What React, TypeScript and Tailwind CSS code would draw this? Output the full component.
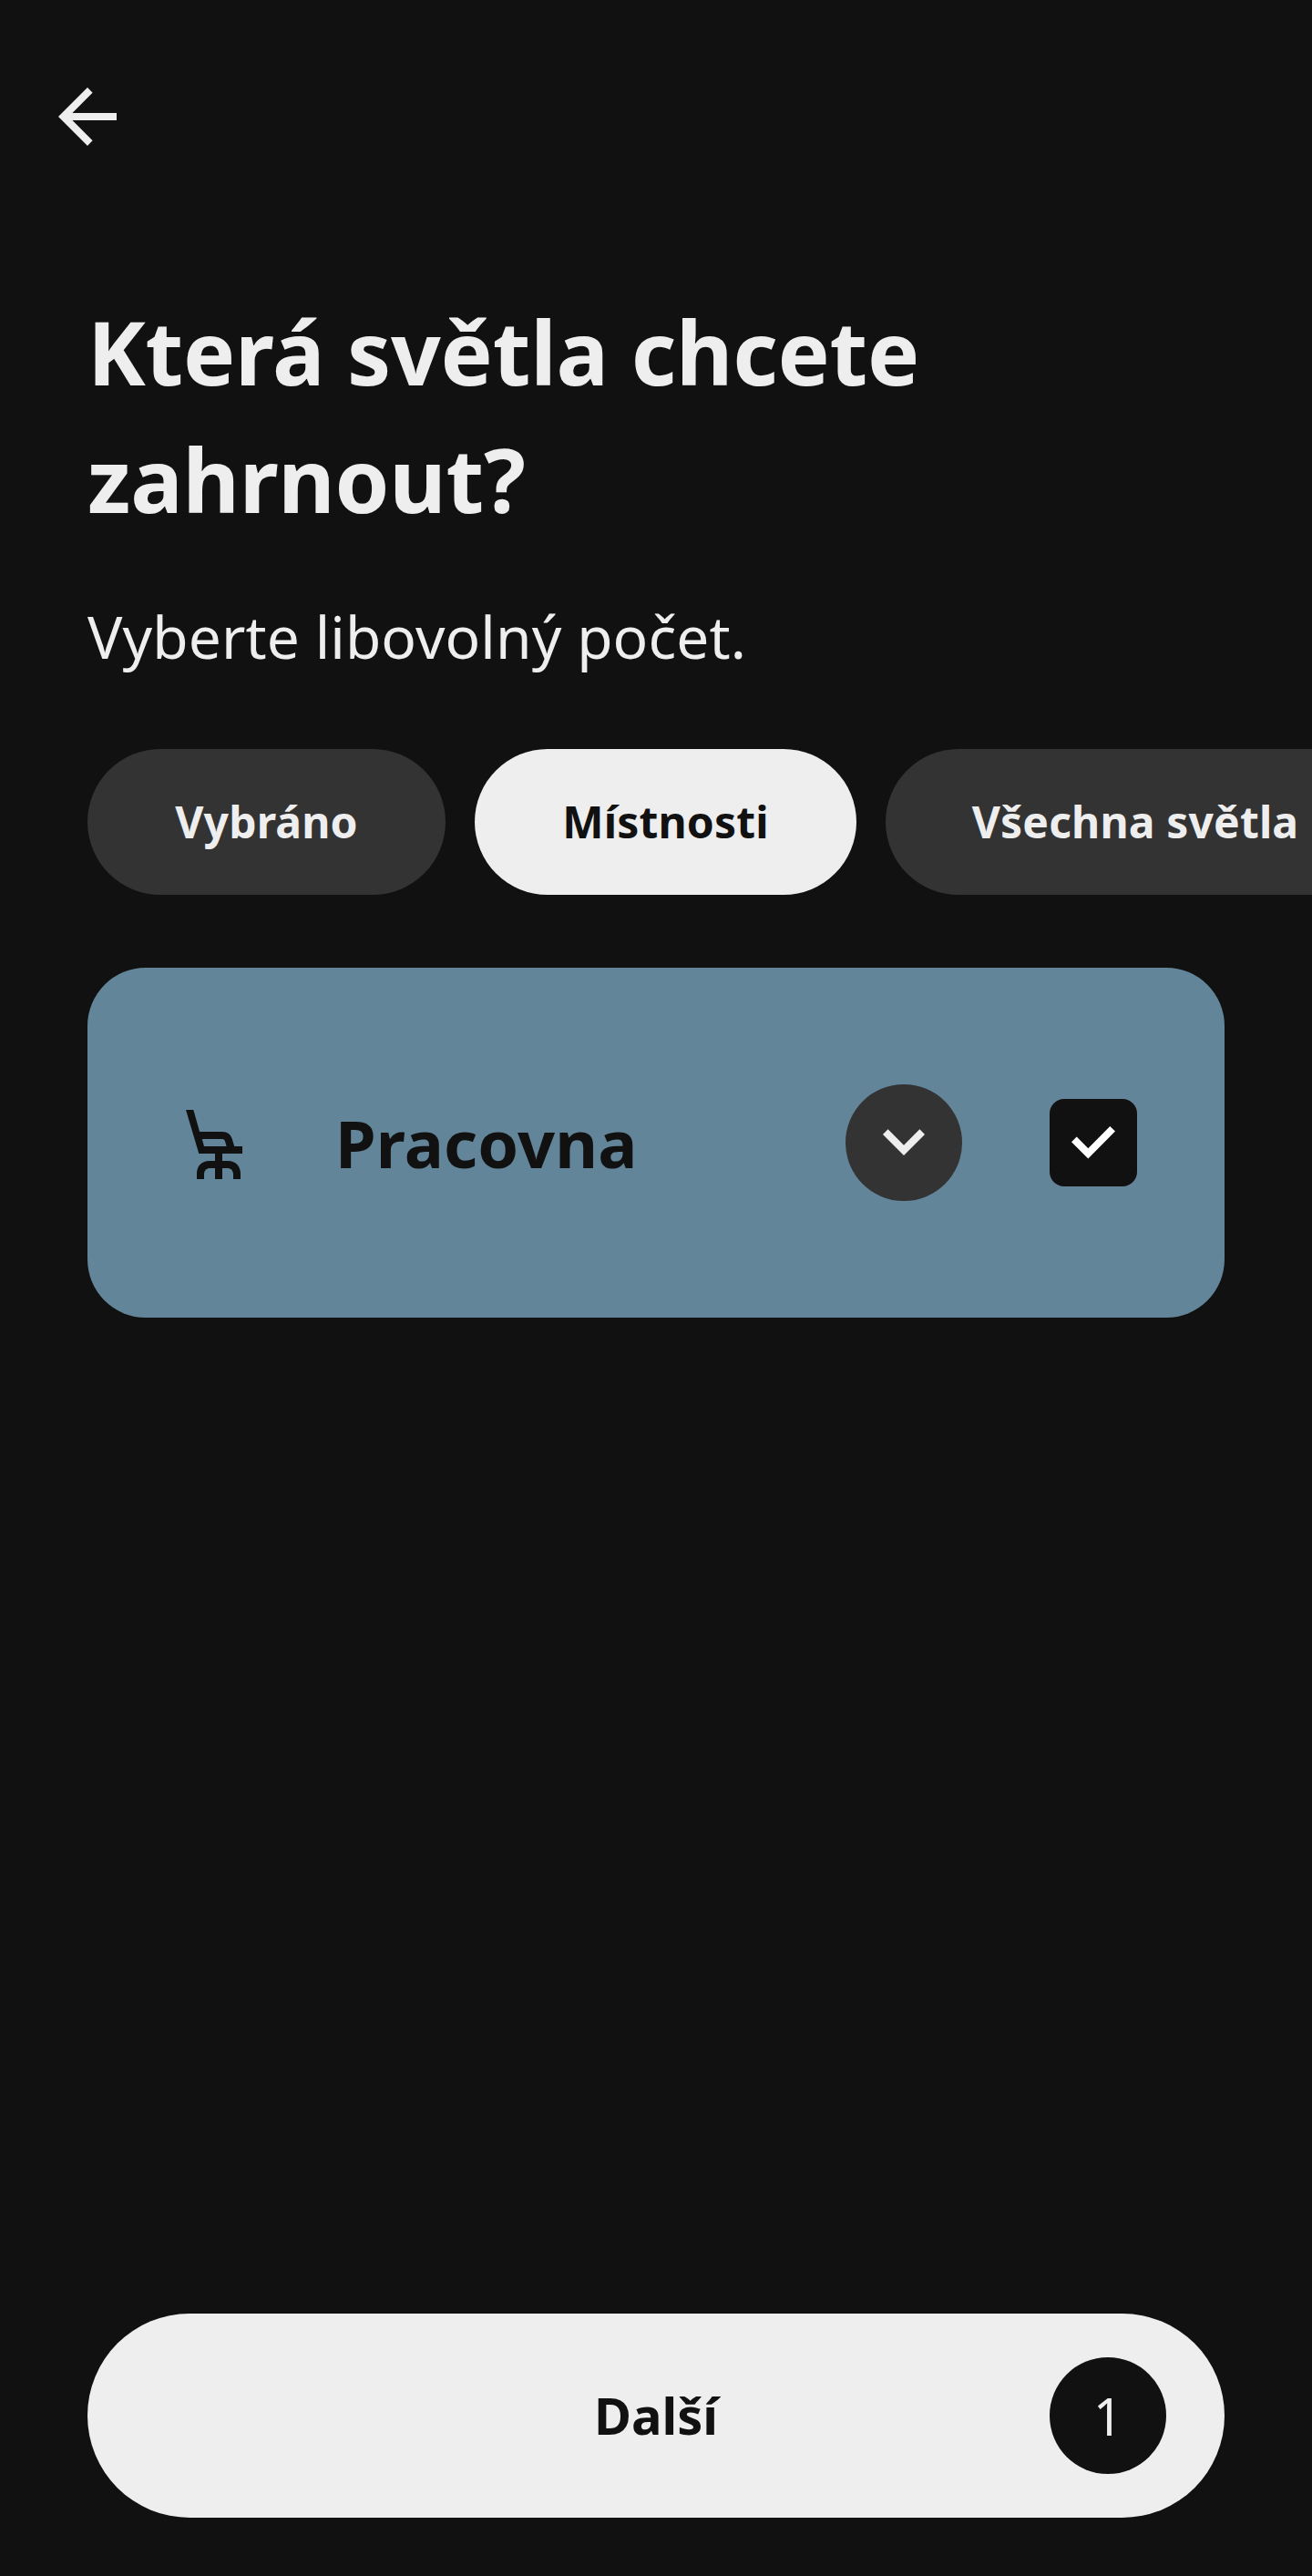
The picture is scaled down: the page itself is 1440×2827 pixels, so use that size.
const filters = [
  { label: 'Vybráno', active: false, width: 'w-[393px]' },
  { label: 'Místnosti', active: true, width: 'w-[419px]' },
  { label: 'Všechna světla', active: false, width: 'w-[548px]' },
];

function ArrowLeft() {
  return (
    <svg className="size-24" viewBox="48 80 96 96" fill="currentColor" aria-hidden="true">
      <path d="M64 128 96 96l5.6 5.7L79.4 124H128v8H79.4l22.2 22.3L96 160z" />
    </svg>
  );
}

function DeskChair() {
  return (
    <svg className="size-24" viewBox="188 1206 96 96" fill="currentColor" aria-hidden="true">
      <path
        fillRule="evenodd"
        d="M204 1218h8.300l6.800 24H244c5.500 0 9.200 2.800 10.800 8l2.400 8H266v8h-47.700zM221.800 1250l2.200 8h24.600l-1.500-5.300c-.5-1.800-1.500-2.700-3.300-2.700z"
      />
      <path d="M236 1266h8v8h6c8.500 0 14 5.500 14 14v6h-8v-5c0-4.500-2.500-7-7-7h-5v12h-8v-12h-5c-4.500 0-7 2.500-7 7v5h-8v-6c0-8.500 5.500-14 14-14h6z" />
    </svg>
  );
}

function ChevronDown() {
  return (
    <svg className="size-16" viewBox="960 1222 64 64" fill="currentColor" aria-hidden="true">
      <path d="M969 1245l5.600-5.700L992 1256.700l17.400-17.400 5.600 5.700-23 23z" />
    </svg>
  );
}

function Check() {
  return (
    <svg className="size-16" viewBox="1168 1222 64 64" fill="currentColor" aria-hidden="true">
      <path d="M1176 1253.300l5.700-5.700 12.600 12.600 24-24.300 5.700 5.700-29.700 30z" />
    </svg>
  );
}

export default function App() {
  return (
    <main className="flex h-[2827px] w-[1440px] flex-col overflow-hidden bg-[#111111] font-['Noto_Sans',sans-serif] text-[#eeeeee]">
      <header className="px-12 pt-20">
        <button className="block" aria-label="Zpět">
          <ArrowLeft />
        </button>
      </header>

      <section className="px-24 pt-[140px]">
        <h1 className="w-[1000px] text-[96px] leading-[140px] font-bold tracking-[-0.2px]">Která světla chcete zahrnout?</h1>
        <p className="mt-[59px] text-[64px] leading-[88px] tracking-[0.11px]">Vyberte libovolný počet.</p>
      </section>

      <nav className="mt-[79px] flex gap-8 overflow-hidden pl-24 text-5xl font-bold tracking-[0.15px] whitespace-nowrap">
        {filters.map(({ label, active, width }) => (
          <button
            key={label}
            className={`h-40 shrink-0 rounded-full ${width} ${active ? 'bg-[#eeeeee] text-[#111111]' : 'bg-[#333333]'}`}
          >
            {label}
          </button>
        ))}
      </nav>

      <section className="mx-24 mt-20 flex h-96 items-center rounded-[64px] bg-[#638599] pr-24 pl-[92px] text-[#111111]">
        <DeskChair />
        <h2 className="ml-[84px] flex-1 text-7xl font-bold tracking-[0.15px]">Pracovna</h2>
        <button className="flex size-32 items-center justify-center rounded-full bg-[#333333] text-[#eeeeee]" aria-label="Rozbalit">
          <ChevronDown />
        </button>
        <button className="ml-24 flex size-24 items-center justify-center rounded-2xl bg-[#111111] text-white" role="checkbox" aria-checked="true" aria-label="Pracovna">
          <Check />
        </button>
      </section>

      <footer className="mt-auto px-24 pb-16">
        <button className="grid h-56 w-full grid-cols-[128px_1fr_128px] items-center rounded-full bg-[#eeeeee] px-16 text-[56px] text-[#111111]">
          <span className="col-start-2 pb-0.5 text-center font-bold">Další</span>
          <span className="flex size-32 items-center justify-center rounded-full bg-[#111111] text-[#eeeeee]">1</span>
        </button>
      </footer>
    </main>
  );
}
